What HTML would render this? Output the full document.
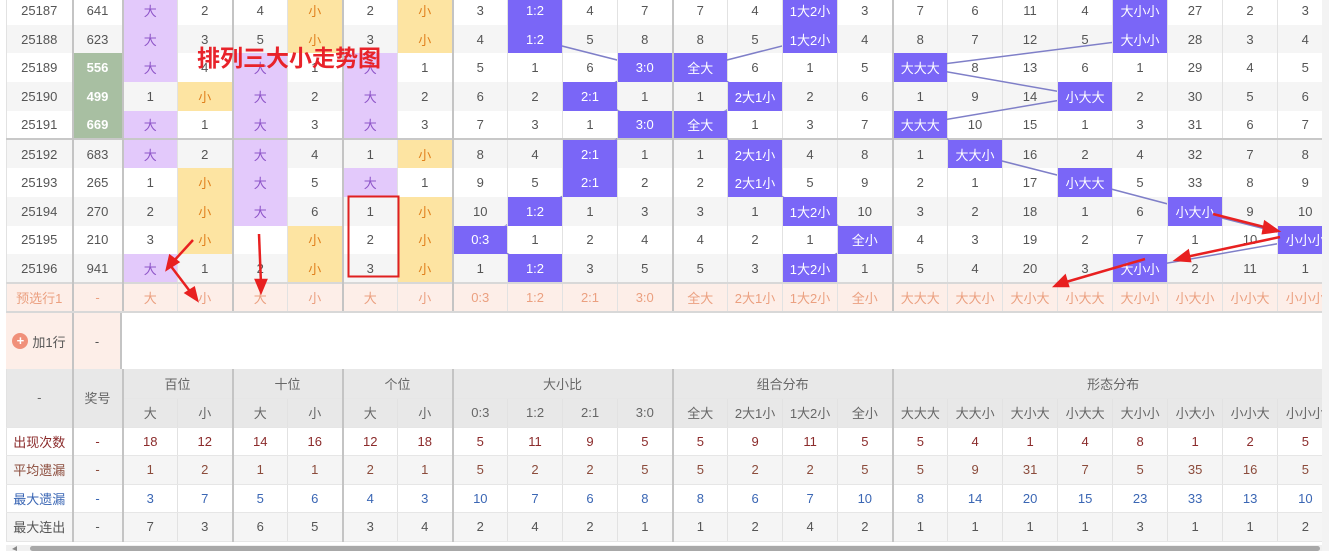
<!DOCTYPE html>
<html><head><meta charset="utf-8"><style>
*{margin:0;padding:0;box-sizing:border-box}
body{width:1329px;height:551px;overflow:hidden;background:#fff;position:relative;font-family:"Liberation Sans","Noto Sans CJK SC",sans-serif;font-size:13px;color:#555}
.wrap{position:absolute;left:6px;top:0;width:1316px;height:551px;overflow:hidden}
table{border-collapse:collapse;table-layout:fixed;position:absolute;left:0}
td{text-align:center;white-space:nowrap;overflow:hidden;border-left:1px solid #e2e2e2;padding:0}
tr.e td{background:#f5f5f5}
td.L{border-left:2px solid #c4c4c4}
td.p{background:#e3c9fb!important;color:#8e55c8}
td.y{background:#fde4a2!important;color:#e0801c}
td.g{background:#a8bfa2!important;color:#fff;font-weight:bold}
td.h{background:#7a66f7!important;color:#fff}
tr.sep td{border-top:2px solid #c8c8c8}
tr.pre td{background:#fdeee8!important;color:#eba080;border-top:2px solid #d8d8d8;border-bottom:2px solid #d8d8d8}
#t1 tr{height:28.7px}
#t2 td{border-bottom:1px solid #e6e6e6}
#t2 tr.hd td{background:#e8e8e8;color:#666;height:29px}
#t2 tr.st td{height:28.5px}
.r1 td{color:#8b2b2b}.r2 td{color:#8b4b3b}.r3 td{color:#3a66b4}.r4 td{color:#555}
</style></head><body>
<div class="wrap">
<table id="t1" style="top:-4px;width:1326px">
<colgroup><col style="width:66px"><col style="width:50px"><col span="22" style="width:55px"></colgroup>
<tr><td>25187</td><td class="L">641</td><td class="L p">大</td><td>2</td><td class="L">4</td><td class="y">小</td><td class="L">2</td><td class="y">小</td><td class="L">3</td><td class="h">1:2</td><td>4</td><td>7</td><td class="L">7</td><td>4</td><td class="h">1大2小</td><td>3</td><td class="L">7</td><td>6</td><td>11</td><td>4</td><td class="h">大小小</td><td>27</td><td>2</td><td>3</td></tr>
<tr class="e"><td>25188</td><td class="L">623</td><td class="L p">大</td><td>3</td><td class="L">5</td><td class="y">小</td><td class="L">3</td><td class="y">小</td><td class="L">4</td><td class="h">1:2</td><td>5</td><td>8</td><td class="L">8</td><td>5</td><td class="h">1大2小</td><td>4</td><td class="L">8</td><td>7</td><td>12</td><td>5</td><td class="h">大小小</td><td>28</td><td>3</td><td>4</td></tr>
<tr><td>25189</td><td class="L g">556</td><td class="L p">大</td><td>4</td><td class="L p">大</td><td>1</td><td class="L p">大</td><td>1</td><td class="L">5</td><td>1</td><td>6</td><td class="h">3:0</td><td class="L h">全大</td><td>6</td><td>1</td><td>5</td><td class="L h">大大大</td><td>8</td><td>13</td><td>6</td><td>1</td><td>29</td><td>4</td><td>5</td></tr>
<tr class="e"><td>25190</td><td class="L g">499</td><td class="L">1</td><td class="y">小</td><td class="L p">大</td><td>2</td><td class="L p">大</td><td>2</td><td class="L">6</td><td>2</td><td class="h">2:1</td><td>1</td><td class="L">1</td><td class="h">2大1小</td><td>2</td><td>6</td><td class="L">1</td><td>9</td><td>14</td><td class="h">小大大</td><td>2</td><td>30</td><td>5</td><td>6</td></tr>
<tr><td>25191</td><td class="L g">669</td><td class="L p">大</td><td>1</td><td class="L p">大</td><td>3</td><td class="L p">大</td><td>3</td><td class="L">7</td><td>3</td><td>1</td><td class="h">3:0</td><td class="L h">全大</td><td>1</td><td>3</td><td>7</td><td class="L h">大大大</td><td>10</td><td>15</td><td>1</td><td>3</td><td>31</td><td>6</td><td>7</td></tr>
<tr class="e sep"><td>25192</td><td class="L">683</td><td class="L p">大</td><td>2</td><td class="L p">大</td><td>4</td><td class="L">1</td><td class="y">小</td><td class="L">8</td><td>4</td><td class="h">2:1</td><td>1</td><td class="L">1</td><td class="h">2大1小</td><td>4</td><td>8</td><td class="L">1</td><td class="h">大大小</td><td>16</td><td>2</td><td>4</td><td>32</td><td>7</td><td>8</td></tr>
<tr><td>25193</td><td class="L">265</td><td class="L">1</td><td class="y">小</td><td class="L p">大</td><td>5</td><td class="L p">大</td><td>1</td><td class="L">9</td><td>5</td><td class="h">2:1</td><td>2</td><td class="L">2</td><td class="h">2大1小</td><td>5</td><td>9</td><td class="L">2</td><td>1</td><td>17</td><td class="h">小大大</td><td>5</td><td>33</td><td>8</td><td>9</td></tr>
<tr class="e"><td>25194</td><td class="L">270</td><td class="L">2</td><td class="y">小</td><td class="L p">大</td><td>6</td><td class="L">1</td><td class="y">小</td><td class="L">10</td><td class="h">1:2</td><td>1</td><td>3</td><td class="L">3</td><td>1</td><td class="h">1大2小</td><td>10</td><td class="L">3</td><td>2</td><td>18</td><td>1</td><td>6</td><td class="h">小大小</td><td>9</td><td>10</td></tr>
<tr><td>25195</td><td class="L">210</td><td class="L">3</td><td class="y">小</td><td class="L"></td><td class="y">小</td><td class="L">2</td><td class="y">小</td><td class="L h">0:3</td><td>1</td><td>2</td><td>4</td><td class="L">4</td><td>2</td><td>1</td><td class="h">全小</td><td class="L">4</td><td>3</td><td>19</td><td>2</td><td>7</td><td>1</td><td>10</td><td class="h">小小小</td></tr>
<tr class="e"><td>25196</td><td class="L">941</td><td class="L p">大</td><td>1</td><td class="L">2</td><td class="y">小</td><td class="L">3</td><td class="y">小</td><td class="L">1</td><td class="h">1:2</td><td>3</td><td>5</td><td class="L">5</td><td>3</td><td class="h">1大2小</td><td>1</td><td class="L">5</td><td>4</td><td>20</td><td>3</td><td class="h">大小小</td><td>2</td><td>11</td><td>1</td></tr>
<tr class="pre"><td>预选行1</td><td class="L">-</td><td class="L">大</td><td>小</td><td class="L">大</td><td>小</td><td class="L">大</td><td>小</td><td class="L">0:3</td><td>1:2</td><td>2:1</td><td>3:0</td><td class="L">全大</td><td>2大1小</td><td>1大2小</td><td>全小</td><td class="L">大大大</td><td>大大小</td><td>大小大</td><td>小大大</td><td>大小小</td><td>小大小</td><td>小小大</td><td>小小小</td></tr>
</table>
<div style="position:absolute;left:0;top:313px;width:66px;height:56px;background:#fdeee8;display:flex;align-items:center;justify-content:center;color:#555;font-size:13px"><span style="display:inline-block;width:16px;height:16px;border-radius:50%;background:#f0907a;color:#fff;font-size:13px;line-height:16px;text-align:center;margin-right:4px;font-weight:bold">+</span>加1行</div>
<div style="position:absolute;left:66px;top:313px;width:50px;height:56px;background:#fdeee8;border-left:2px solid #c4c4c4;border-right:2px solid #c4c4c4;display:flex;align-items:center;justify-content:center">-</div>
<table id="t2" style="top:369px;width:1326px">
<colgroup><col style="width:66px"><col style="width:50px"><col span="22" style="width:55px"></colgroup>
<tr class="hd"><td rowspan="2">-</td><td rowspan="2" class="L">奖号</td><td colspan="2" class="L">百位</td><td colspan="2" class="L">十位</td><td colspan="2" class="L">个位</td><td colspan="4" class="L">大小比</td><td colspan="4" class="L">组合分布</td><td colspan="8" class="L">形态分布</td></tr>
<tr class="hd"><td class="L">大</td><td>小</td><td class="L">大</td><td>小</td><td class="L">大</td><td>小</td><td class="L">0:3</td><td>1:2</td><td>2:1</td><td>3:0</td><td class="L">全大</td><td>2大1小</td><td>1大2小</td><td>全小</td><td class="L">大大大</td><td>大大小</td><td>大小大</td><td>小大大</td><td>大小小</td><td>小大小</td><td>小小大</td><td>小小小</td></tr>
<tr class="st r1"><td>出现次数</td><td class="L">-</td><td class="L">18</td><td>12</td><td class="L">14</td><td>16</td><td class="L">12</td><td>18</td><td class="L">5</td><td>11</td><td>9</td><td>5</td><td class="L">5</td><td>9</td><td>11</td><td>5</td><td class="L">5</td><td>4</td><td>1</td><td>4</td><td>8</td><td>1</td><td>2</td><td>5</td></tr>
<tr class="st r2 e"><td>平均遗漏</td><td class="L">-</td><td class="L">1</td><td>2</td><td class="L">1</td><td>1</td><td class="L">2</td><td>1</td><td class="L">5</td><td>2</td><td>2</td><td>5</td><td class="L">5</td><td>2</td><td>2</td><td>5</td><td class="L">5</td><td>9</td><td>31</td><td>7</td><td>5</td><td>35</td><td>16</td><td>5</td></tr>
<tr class="st r3"><td>最大遗漏</td><td class="L">-</td><td class="L">3</td><td>7</td><td class="L">5</td><td>6</td><td class="L">4</td><td>3</td><td class="L">10</td><td>7</td><td>6</td><td>8</td><td class="L">8</td><td>6</td><td>7</td><td>10</td><td class="L">8</td><td>14</td><td>20</td><td>15</td><td>23</td><td>33</td><td>13</td><td>10</td></tr>
<tr class="st r4 e"><td>最大连出</td><td class="L">-</td><td class="L">7</td><td>3</td><td class="L">6</td><td>5</td><td class="L">3</td><td>4</td><td class="L">2</td><td>4</td><td>2</td><td>1</td><td class="L">1</td><td>2</td><td>4</td><td>2</td><td class="L">1</td><td>1</td><td>1</td><td>1</td><td>3</td><td>1</td><td>1</td><td>2</td></tr>
</table>
</div>
<svg width="1329" height="551" style="position:absolute;left:0;top:0" xmlns="http://www.w3.org/2000/svg">
<defs><mask id="m" maskUnits="userSpaceOnUse" x="0" y="0" width="1329" height="551">
<rect x="0" y="0" width="1329" height="551" fill="#fff"/>
<g fill="#000">
<rect x="507" y="-4" width="55" height="28.7"/><rect x="507" y="24.7" width="55" height="28.7"/><rect x="617" y="53.4" width="55" height="28.7"/><rect x="562" y="82.1" width="55" height="28.7"/><rect x="617" y="110.8" width="55" height="28.7"/><rect x="562" y="139.5" width="55" height="28.7"/><rect x="562" y="168.2" width="55" height="28.7"/><rect x="507" y="196.9" width="55" height="28.7"/><rect x="452" y="225.6" width="55" height="28.7"/><rect x="507" y="254.3" width="55" height="28.7"/>
<rect x="782" y="-4" width="55" height="28.7"/><rect x="782" y="24.7" width="55" height="28.7"/><rect x="672" y="53.4" width="55" height="28.7"/><rect x="727" y="82.1" width="55" height="28.7"/><rect x="672" y="110.8" width="55" height="28.7"/><rect x="727" y="139.5" width="55" height="28.7"/><rect x="727" y="168.2" width="55" height="28.7"/><rect x="782" y="196.9" width="55" height="28.7"/><rect x="837" y="225.6" width="55" height="28.7"/><rect x="782" y="254.3" width="55" height="28.7"/>
<rect x="1112" y="-4" width="55" height="28.7"/><rect x="1112" y="24.7" width="55" height="28.7"/><rect x="892" y="53.4" width="55" height="28.7"/><rect x="1057" y="82.1" width="55" height="28.7"/><rect x="892" y="110.8" width="55" height="28.7"/><rect x="947" y="139.5" width="55" height="28.7"/><rect x="1057" y="168.2" width="55" height="28.7"/><rect x="1167" y="196.9" width="55" height="28.7"/><rect x="1277" y="225.6" width="55" height="28.7"/><rect x="1112" y="254.3" width="55" height="28.7"/>
</g></mask></defs>
<g fill="none" stroke="#7f7fc8" stroke-width="1.5" mask="url(#m)">
<polyline points="534.5,10 534.5,39 644.5,67 589.5,96 644.5,124 589.5,154 589.5,182 534.5,211 479.5,239 534.5,268"/>
<polyline points="809.5,10 809.5,39 699.5,67 754.5,96 699.5,124 754.5,154 754.5,182 809.5,211 864.5,239 809.5,268"/>
<polyline points="1139.5,10 1139.5,39 919.5,67 1084.5,96 919.5,124 974.5,154 1084.5,182 1194.5,211 1304.5,239 1139.5,268"/>
</g>
<text x="197" y="66" fill="#e8232a" font-size="23" font-weight="bold" font-family="Liberation Sans,Noto Sans CJK SC,sans-serif">排列三大小走势图</text>
<rect x="348.5" y="196.5" width="50" height="80" fill="none" stroke="#e02020" stroke-width="2"/>
<g stroke="#e82020" stroke-width="2.5" fill="#e82020">
<line x1="193" y1="240" x2="172" y2="263"/><polygon points="167,269 170,256 178,262"/>
<line x1="170" y1="265" x2="192" y2="294"/><polygon points="197,300 186,293 194,288"/>
<line x1="259" y1="234" x2="261" y2="284"/><polygon points="261,292 256,280 266,280"/>
<line x1="1213" y1="214" x2="1268" y2="228"/><polygon points="1278,231 1265,222 1263,233"/>
<line x1="1280" y1="237" x2="1186" y2="257"/><polygon points="1176,260 1188,251 1190,261"/>
<line x1="1145" y1="259" x2="1066" y2="282"/><polygon points="1055,286 1065,276 1068,286"/>
</g>
<rect x="6" y="545" width="1316" height="6" fill="#f0f0f0"/>
<rect x="30" y="546" width="1290" height="5" rx="2.5" fill="#a8a8a8"/>
<polygon points="12,549 17,546 17,551" fill="#888"/>
<rect x="1322" y="0" width="7" height="551" fill="#f3f3f3"/>
</svg>
</body></html>
